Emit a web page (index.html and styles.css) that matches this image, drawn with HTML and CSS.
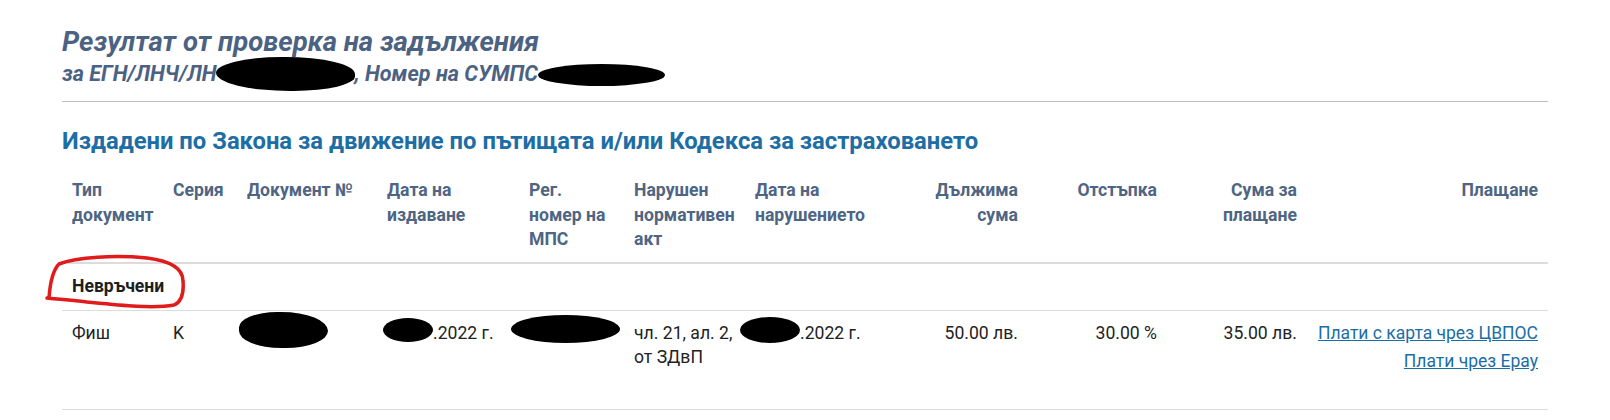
FILE: index.html
```html
<!DOCTYPE html>
<html lang="bg">
<head>
    <meta charset="UTF-8">
    <meta name="viewport" content="width=device-width, initial-scale=1.0">
    <title>Резултат от проверка на задължения</title>
    <link rel="stylesheet" href="styles.css">
</head>
<body>
    <div class="container">
        <!-- Result header -->
        <div class="result-header">
            <h1>Резултат от проверка на задължения</h1>
            <div class="subtitle">за ЕГН/ЛНЧ/ЛН<span class="redact redact-egn"></span>, Номер на СУМПС<span class="redact redact-sumps"></span></div>
        </div>

        <hr class="divider">

        <h2>Издадени по Закона за движение по пътищата и/или Кодекса за застраховането</h2>

        <table class="obligations">
            <colgroup>
                <col style="width: 101px">
                <col style="width: 74px">
                <col style="width: 140px">
                <col style="width: 142px">
                <col style="width: 105px">
                <col style="width: 121px">
                <col style="width: 153px">
                <col style="width: 130px">
                <col style="width: 139px">
                <col style="width: 140px">
                <col style="width: 241px">
            </colgroup>
            <thead>
                <tr>
                    <th>Тип документ</th>
                    <th>Серия</th>
                    <th>Документ №</th>
                    <th>Дата на издаване</th>
                    <th>Рег. номер на МПС</th>
                    <th>Нарушен нормативен акт</th>
                    <th>Дата на нарушението</th>
                    <th class="num">Дължима сума</th>
                    <th class="num">Отстъпка</th>
                    <th class="num">Сума за плащане</th>
                    <th class="num">Плащане</th>
                </tr>
            </thead>
            <tbody>
                <tr class="group-row">
                    <td colspan="11">
                        <span class="group-title">Невръчени</span>
                        <svg class="marker-loop" width="145" height="57" viewBox="0 0 145 57">
                            <path d="M4,44 C5,30 8,16 14,10 C32,3 70,1 102,4 C126,7 138,14 138,27 C139,39 136,48 129,51 C108,55 72,51 42,48 C26,46 12,45 2,44"/>
                        </svg>
                    </td>
                </tr>
                <tr>
                    <td>Фиш</td>
                    <td>K</td>
                    <td><span class="redact redact-doc"></span></td>
                    <td><span class="redact redact-date"></span>.2022 г.</td>
                    <td><span class="redact redact-reg"></span></td>
                    <td>чл. 21, ал. 2, от ЗДвП</td>
                    <td><span class="redact redact-vdate"></span>.2022 г.</td>
                    <td class="num">50.00 лв.</td>
                    <td class="num">30.00 %</td>
                    <td class="num">35.00 лв.</td>
                    <td class="num">
                        <div class="pay-links">
                            <a href="#">Плати с карта чрез ЦВПОС</a>
                            <a href="#">Плати чрез Epay</a>
                        </div>
                    </td>
                </tr>
            </tbody>
        </table>
    </div>
</body>
</html>
```

FILE: styles.css
```css
body {
    margin: 0;
    font-family: Roboto, "Noto Sans", sans-serif;
    color: #222;
    background: #fff;
}
.container {
    width: 1486px;
    margin-left: 62px;
}
.result-header {
    padding-top: 26px;
    color: #4b6283;
    font-style: italic;
    font-weight: 700;
}
h1 {
    margin: 0;
    font-size: 27.5px;
    line-height: 31px;
}
.subtitle {
    margin-top: 4px;
    font-size: 21.6px;
    line-height: 26px;
}
.divider {
    margin: 14px 0 0;
    border: none;
    border-top: 1px solid #bdbdbd;
}
h2 {
    margin: 24px 0 0;
    font-size: 23.8px;
    line-height: 30px;
    color: #1c6ea4;
}
.obligations {
    width: 100%;
    margin-top: 12px;
    border-collapse: collapse;
    table-layout: fixed;
    font-size: 17.6px;
    line-height: 1.4;
}
.obligations th,
.obligations td {
    padding: 10px;
    text-align: left;
    vertical-align: top;
}
.obligations th {
    color: #4e6584;
    font-weight: 700;
    border-bottom: 2px solid #dcdcdc;
}
.obligations td {
    border-bottom: 1px solid #dcdcdc;
}
.obligations .num {
    text-align: right;
}
.group-row td {
    position: relative;
    padding-bottom: 11px;
}
.group-title {
    font-weight: 700;
    color: #1e1e1e;
}
.marker-loop {
    position: absolute;
    left: -17px;
    top: -10px;
}
.marker-loop path {
    fill: none;
    stroke: #e01b1b;
    stroke-width: 3.5;
    stroke-linecap: round;
    stroke-linejoin: round;
}
.pay-links {
    padding-bottom: 21px;
}
.pay-links a {
    display: block;
    margin-bottom: 4px;
    font-size: 17.5px;
    line-height: 24.6px;
    white-space: nowrap;
    color: #1a6ea6;
    text-decoration: underline;
}

/* black marker over personal data */
.redact {
    display: inline-block;
    background: #000;
    border-radius: 50%;
}
.redact-egn {
    width: 139px;
    height: 34px;
    margin: -14px 0 -10px -1px;
    border-radius: 48% 52% 45% 55%;
}
.redact-sumps {
    width: 127px;
    height: 22px;
    margin: -7px 0 -5px 0;
}
.redact-doc {
    width: 89px;
    height: 36px;
    margin: -17px 0 -9px -8px;
    border-radius: 45% 55% 50% 50%;
}
.redact-date {
    width: 50px;
    height: 24px;
    margin: -11px 0 -3px -4px;
}
.redact-reg {
    width: 109px;
    height: 28px;
    margin: -14px 0 -4px -18px;
}
.redact-vdate {
    width: 60px;
    height: 26px;
    margin: -12px 0 -4px -15px;
}
```
